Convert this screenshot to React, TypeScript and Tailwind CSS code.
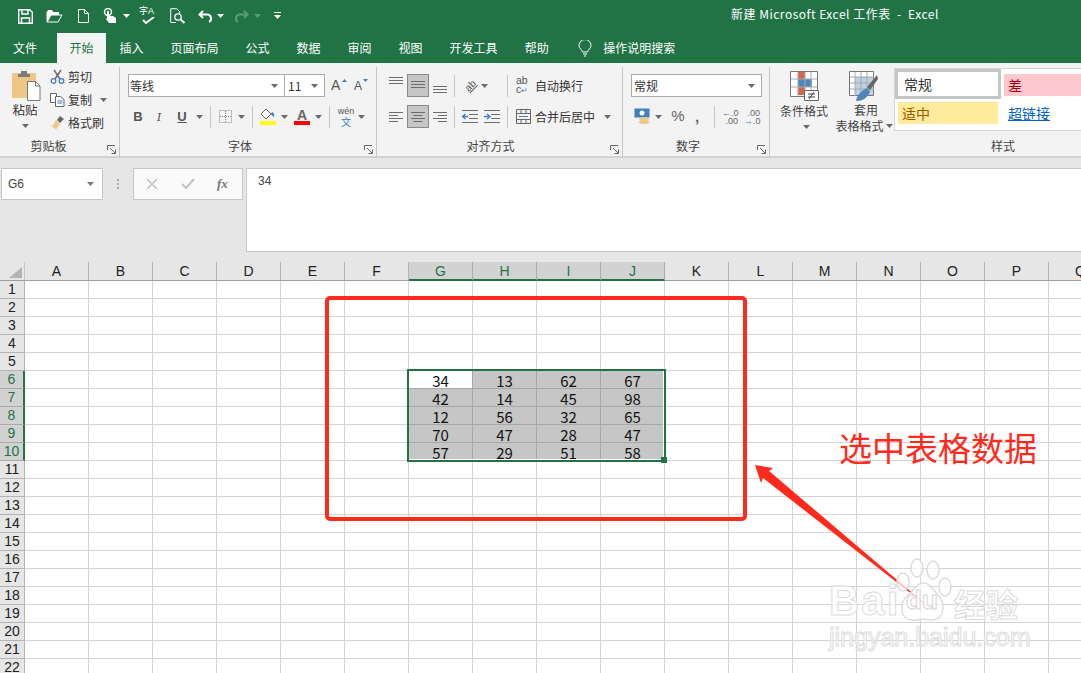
import React from "react";

const UI_FONT = "font-['Noto_Sans_CJK_SC','Liberation_Sans',sans-serif]";
const COLS = ["A", "B", "C", "D", "E", "F", "G", "H", "I", "J", "K", "L", "M", "N", "O", "P", "Q"];
const ROWS = Array.from({ length: 22 }, (_, i) => i + 1);
const SEL_COLS = ["G", "H", "I", "J"];
const DATA: Record<number, number[]> = {
  6: [34, 13, 62, 67],
  7: [42, 14, 45, 98],
  8: [12, 56, 32, 65],
  9: [70, 47, 28, 47],
  10: [57, 29, 51, 58],
};
const TABS = ["插入", "页面布局", "公式", "数据", "审阅", "视图", "开发工具", "帮助"];

function Caret({ color = "#6a6a6a", className = "" }: { color?: string; className?: string }) {
  return (
    <svg width="7" height="4" viewBox="0 0 7 4" className={`shrink-0 ${className}`}>
      <path d="M0 0h7L3.5 4z" fill={color} />
    </svg>
  );
}

function Sep({ className = "" }: { className?: string }) {
  return <div className={`w-px h-[22px] bg-[#c6c6c6] shrink-0 ${className}`} />;
}

function Launcher() {
  return (
    <svg width="9" height="9" viewBox="0 0 9 9" className="absolute right-[3px] bottom-[3px]">
      <path d="M.5 5V.5H8M3 3l5 5M8.500 4.500v4h-4" fill="none" stroke="#666" />
    </svg>
  );
}

function Group({ label, width, labelClass, children }: { label: string; width: string; labelClass: string; children: React.ReactNode }) {
  return (
    <div className={`relative h-[90px] shrink-0 mt-[4px] border-r border-[#c6c6c6] ${width}`}>
      <div className="h-[70px]">{children}</div>
      <div className={`text-center text-[12px] leading-[17px] text-[#444] ${labelClass}`}>{label}</div>
      <Launcher />
    </div>
  );
}

// quick access toolbar
function Qat() {
  return (
    <div className="absolute left-[18px] top-[8px] flex items-center">
      <svg width="15" height="15" viewBox="0 0 15 15" fill="none" stroke="#fff" strokeWidth="1.400">
        <path d="M.7.700h11l2.600 2.600v11H.7z" />
        <path d="M4 1v4h6V1M3.500 14V9h8v5" />
      </svg>
      <svg width="17" height="14" viewBox="0 0 17 14" fill="#fff" className="ml-[13px]">
        <path d="M1 3V13h11l4-7H5L1.800 12" fill="none" stroke="#fff" />
        <path d="M1 3 2 1h4l1 2h6v3H5L1 13z" fill="#fff" />
      </svg>
      <svg width="11" height="14" viewBox="0 0 11 14" fill="none" stroke="#fff" className="ml-[15px]">
        <path d="M.5.500h6l4 4v9H.5zM6.500.500v4h4" />
      </svg>
      <svg width="14" height="16" viewBox="0 0 14 16" className="ml-[14px]" fill="#fff">
        <circle cx="5" cy="4" r="3.500" fill="none" stroke="#fff" strokeWidth="1.400" />
        <path d="M4 3h2v5h4l3 2v5H6L3 11l1-1z" />
      </svg>
      <Caret color="#fff" className="ml-[6px]" />
      <div className="relative ml-[9px] w-[17px] h-[16px]">
        <span className="absolute left-0 top-[-3px] text-[9px] leading-[12px] text-white">字</span>
        <span className="absolute left-[9px] top-[-3px] text-[9px] leading-[12px] text-white font-['Liberation_Sans',sans-serif]">A</span>
        <svg width="14" height="8" viewBox="0 0 14 8" className="absolute left-[3px] top-[9px]" fill="none" stroke="#fff" strokeWidth="2">
          <path d="M1 3l3 3 8-6" />
        </svg>
      </div>
      <svg width="16" height="16" viewBox="0 0 16 16" fill="none" stroke="#fff" className="ml-[14px]">
        <path d="M6 14.500H.7V.700h6l3 3v2" />
        <circle cx="8" cy="9" r="3.200" strokeWidth="1.300" />
        <path d="M10.500 11.500 14.500 15" strokeWidth="2" />
      </svg>
      <svg width="15" height="13" viewBox="0 0 15 13" fill="none" stroke="#fff" strokeWidth="2" className="ml-[12px]">
        <path d="M5 1 1.500 4.500 5 8M2 4.500h7a4 4 0 0 1 2 7.500" />
      </svg>
      <Caret color="#fff" className="ml-[4px]" />
      <svg width="15" height="13" viewBox="0 0 15 13" fill="none" stroke="#5d9a7a" strokeWidth="2" className="ml-[10px]">
        <path d="M10 1l3.500 3.500L10 8M13 4.500H6a4 4 0 0 0-2 7.500" />
      </svg>
      <Caret color="#5d9a7a" className="ml-[5px]" />
      <svg width="7" height="8" viewBox="0 0 7 8" className="ml-[13px]" fill="#fff">
        <path d="M0 0h7v1H0zM0 3h7L3.500 7z" />
      </svg>
    </div>
  );
}

function AlignLines({ kind }: { kind: "left" | "center" | "right" | "plain" }) {
  const d = {
    plain: "M0 .5h14M0 3.500h14M0 6.500h14",
    left: "M0 .5h14M0 3.500h9M0 6.500h14M0 9.500h9",
    center: "M0 .5h14M2.500 3.500h9M0 6.500h14M2.500 9.500h9",
    right: "M0 .5h14M5 3.500h9M0 6.500h14M5 9.500h9",
  }[kind];
  return (
    <svg width="14" height="10" viewBox="0 0 14 10" fill="none" stroke="#6d6d6d">
      <path d={d} />
    </svg>
  );
}

function ActiveBox({ children }: { children: React.ReactNode }) {
  return (
    <div className="w-[22px] h-[23px] flex items-center justify-center bg-[#c6c6c6] border border-[#8a8a8a]">{children}</div>
  );
}

function ClipboardGroup() {
  return (
    <Group label="剪贴板" width="w-[120px]" labelClass="pr-[22px]">
      <div className="flex h-full">
        <div className="w-[50px] flex flex-col items-center">
          <svg width="29" height="31" viewBox="0 0 29 31" className="mt-[3px] ml-[3px]">
            <rect x="0" y="3" width="24" height="25" rx="1" fill="#eec788" />
            <path d="M6 4h12v3H6zM9 1h6v3H9z" fill="#7a7a7a" />
            <path d="M15.500 11.500h8l4.500 4.500v14.500H15.500z" fill="#fff" stroke="#777" />
            <path d="M23.500 11.500V16H28" fill="none" stroke="#777" />
          </svg>
          <div className="text-[12.500px] leading-[17px] text-[#333]">粘贴</div>
          <Caret className="mt-[6px]" />
        </div>
        <div className="flex flex-col -mt-[2px] text-[12px] leading-[23px] text-[#333]">
          <div className="flex items-center h-[23px]">
            <svg width="15" height="15" viewBox="0 0 15 15" fill="none" className="mr-[3px]">
              <path d="M4 1l6 9M11 1 5 10" stroke="#666" strokeWidth="1.400" />
              <circle cx="3.500" cy="12" r="2.300" stroke="#3f7fc1" strokeWidth="1.300" />
              <circle cx="11.500" cy="12" r="2.300" stroke="#3f7fc1" strokeWidth="1.300" />
            </svg>
            剪切
          </div>
          <div className="flex items-center h-[23px]">
            <svg width="15" height="14" viewBox="0 0 15 14" fill="#fff" stroke="#666" className="mr-[3px]">
              <path d="M.5.500h6v9h-6z" />
              <path d="M5.500 3.500h5l3.500 3v7H5.500z" />
              <path d="M7.500 8h5M7.500 10h5" stroke="#3f7fc1" />
            </svg>
            复制
            <Caret className="ml-[8px]" />
          </div>
          <div className="flex items-center h-[23px]">
            <svg width="15" height="14" viewBox="0 0 15 14" className="mr-[3px]">
              <path d="M10 0l4 3-4 4-3-3z" fill="#666" />
              <path d="M6 4l4 4-4 5.500L0 9l3 .5z" fill="#eec788" />
            </svg>
            格式刷
          </div>
        </div>
      </div>
    </Group>
  );
}

function FontGroup() {
  return (
    <Group label="字体" width="w-[257px]" labelClass="pr-[16px]">
      <div className="pl-[8px] pt-[7px]">
        <div className="flex items-center h-[23px]">
          <div className="w-[157px] h-[23px] bg-white border border-[#ababab] flex items-center justify-between pl-[1px] pr-[6px] text-[12px] text-[#333]">
            等线
            <Caret />
          </div>
          <div className="w-[40px] h-[23px] bg-white border border-l-0 border-[#ababab] flex items-center justify-between pl-[3px] pr-[6px] text-[12px] text-[#333]">
            11
            <Caret />
          </div>
          <div className="relative ml-[6px] w-[16px] h-[23px] text-[14px] leading-[23px] text-[#555] font-['Liberation_Sans',sans-serif]">
            A
            <svg width="5" height="3" viewBox="0 0 5 3" className="absolute left-[11px] top-[5px]"><path d="M0 3h5L2.500 0z" fill="#3f7fc1" /></svg>
          </div>
          <div className="relative ml-[7px] w-[16px] h-[23px] text-[12px] leading-[24px] text-[#555] font-['Liberation_Sans',sans-serif]">
            A
            <svg width="5" height="3" viewBox="0 0 5 3" className="absolute left-[9px] top-[5px]"><path d="M0 0h5L2.500 3z" fill="#3f7fc1" /></svg>
          </div>
        </div>
        <div className="flex items-center h-[23px] mt-[8px] text-[#555] font-['Liberation_Sans',sans-serif]">
          <span className="w-[20px] text-center text-[13px] font-bold">B</span>
          <span className="w-[22px] text-center text-[13px] italic font-serif">I</span>
          <span className="w-[24px] text-center text-[13px] font-bold underline">U</span>
          <Caret className="ml-[2px]" />
          <Sep className="ml-[7px]" />
          <svg width="13" height="13" viewBox="0 0 13 13" className="ml-[8px]" fill="none" stroke="#888" strokeDasharray="1 1">
            <path d="M.5.500h12v12H.5zM6.500 1v12M1 6.500h12" />
          </svg>
          <Caret className="ml-[6px]" />
          <Sep className="ml-[7px]" />
          <div className="ml-[7px] w-[16px] h-[17px] relative">
            <svg width="16" height="12" viewBox="0 0 16 12" className="absolute top-0 left-0">
              <path d="M1 6l5-5 5 5-5 5z" fill="#fff" stroke="#666" />
              <path d="M12 4c2 1 3 3 2 5-1-1-3-2-3-3z" fill="#3f7fc1" />
            </svg>
            <div className="absolute bottom-0 left-0 w-[16px] h-[4px] bg-[#ffff00]" />
          </div>
          <Caret className="ml-[5px]" />
          <div className="ml-[6px] w-[16px] h-[17px] relative text-center text-[14px] leading-[15px] font-bold text-[#666]">
            A
            <div className="absolute bottom-0 left-0 w-[16px] h-[4px] bg-[#ff0000]" />
          </div>
          <Caret className="ml-[5px]" />
          <Sep className="ml-[7px]" />
          <div className={`ml-[7px] w-[18px] flex flex-col items-center ${UI_FONT}`}>
            <span className="text-[9px] leading-[10px] text-[#555] font-['Liberation_Sans',sans-serif]">wén</span>
            <span className="text-[10px] leading-[11px] text-[#3f7fc1]">文</span>
          </div>
          <Caret className="ml-[3px]" />
        </div>
      </div>
    </Group>
  );
}

function AlignGroup() {
  return (
    <Group label="对齐方式" width="w-[246px]" labelClass="pr-[18px]">
      <div className="pl-[8px] pt-[7px] text-[12px] text-[#333]">
        <div className="flex items-center h-[23px]">
          <div className="w-[16px] mr-[2px] ml-[4px] h-[23px] pt-[3px]"><AlignLines kind="plain" /></div>
          <ActiveBox><AlignLines kind="plain" /></ActiveBox>
          <div className="w-[14px] ml-[4px] h-[23px] pt-[12px]"><AlignLines kind="plain" /></div>
          <Sep className="ml-[7px]" />
          <div className="ml-[7px] w-[17px] h-[16px] flex items-center justify-center">
            <span className="-rotate-45 text-[10px] leading-[10px] text-[#555] font-['Liberation_Sans',sans-serif] underline">ab</span>
          </div>
          <Caret className="ml-[2px]" />
          <Sep className="ml-[19px]" />
          <div className="ml-[8px] w-[14px] text-[10.500px] leading-[9px] text-[#555] font-['Liberation_Sans',sans-serif]">ab<br />c<span className="text-[#3f7fc1] text-[8px]">↵</span></div>
          <span className="ml-[5px]">自动换行</span>
        </div>
        <div className="flex items-center h-[23px] mt-[8px]">
          <div className="w-[16px] mr-[2px] ml-[4px]"><AlignLines kind="left" /></div>
          <ActiveBox><AlignLines kind="center" /></ActiveBox>
          <div className="w-[14px] ml-[4px]"><AlignLines kind="right" /></div>
          <Sep className="ml-[7px]" />
          <svg width="16" height="13" viewBox="0 0 16 13" className="ml-[7px]" fill="none" stroke="#6d6d6d">
            <path d="M0 .5h16M7 4.500h9M7 8.500h9M0 12.500h16" />
            <path d="M6 6.500H1M3.500 4l-3 2.500 3 2.500" stroke="#3f7fc1" strokeWidth="1.300" />
          </svg>
          <svg width="16" height="13" viewBox="0 0 16 13" className="ml-[6px]" fill="none" stroke="#6d6d6d">
            <path d="M0 .5h16M7 4.500h9M7 8.500h9M0 12.500h16" />
            <path d="M0 6.500h5M3 4l3 2.500L3 9" stroke="#3f7fc1" strokeWidth="1.300" />
          </svg>
          <Sep className="ml-[7px]" />
          <svg width="15" height="15" viewBox="0 0 15 15" className="ml-[8px]" fill="none" stroke="#666">
            <path d="M.5.500h14v14H.5zM1 4.500h13M1 10.500h13M5 1v3M10 1v3M5 11v3M10 11v3" />
            <path d="M3 7.500h9" stroke="#3f7fc1" />
          </svg>
          <span className="ml-[4px]">合并后居中</span>
          <Caret className="ml-[9px]" />
        </div>
      </div>
    </Group>
  );
}

function NumberGroup() {
  return (
    <Group label="数字" width="w-[147px]" labelClass="pr-[16px]">
      <div className="pl-[8px] pt-[7px]">
        <div className="w-[131px] h-[23px] bg-white border border-[#ababab] flex items-center justify-between pl-[2px] pr-[6px] text-[12px] text-[#333]">
          常规
          <Caret />
        </div>
        <div className="flex items-center h-[23px] mt-[8px] ml-[3px] text-[#666] font-['Liberation_Sans',sans-serif]">
          <svg width="16" height="17" viewBox="0 0 16 17">
            <rect x="0.500" y="0.500" width="15" height="9" fill="#3f7fc1" />
            <circle cx="8" cy="5" r="2.500" fill="#fff" />
            <ellipse cx="10" cy="11" rx="5" ry="2" fill="#eec788" />
            <ellipse cx="10" cy="14" rx="5" ry="2" fill="#eec788" />
          </svg>
          <Caret className="ml-[5px]" />
          <span className="ml-[8px] w-[16px] text-center text-[15px]">%</span>
          <span className="ml-[9px] w-[6px] text-[15px] font-bold leading-[14px]">,</span>
          <Sep className="ml-[13px]" />
          <div className="ml-[7px] w-[16px] text-[9px] leading-[8px] text-right">
            <span className="text-[#3f7fc1]">←</span>.0<br />.00
          </div>
          <div className="ml-[6px] w-[16px] text-[9px] leading-[8px] text-right">
            .00<br /><span className="text-[#3f7fc1]">→</span>.0
          </div>
        </div>
      </div>
    </Group>
  );
}

function StylesGroup() {
  return (
    <div className="relative flex-1 h-[90px] mt-[4px] min-w-0">
      <div className="flex h-[70px]">
        <div className="w-[68px] flex flex-col items-center text-[12px] leading-[16px] text-[#444]">
          <svg width="29" height="30" viewBox="0 0 29 30" className="mt-[4px]">
            <path d="M.5.500h27v25H.5z" fill="#fff" stroke="#777" />
            <path d="M8 1h7v7H8zM8 16h7v8H8z" fill="#d8644a" />
            <path d="M8 8h14v8H8z" fill="#4f86bd" />
            <path d="M1 8h26M1 16h26M8 1v24M15 1v24M21 1v24" stroke="#aaa" fill="none" />
            <path d="M14.500 19.500h14v10h-14z" fill="#fff" stroke="#666" />
            <path d="M18 23h7M18 26h7M24 21l-5 7" stroke="#444" fill="none" />
          </svg>
          <div className="mt-[2px]">条件格式</div>
          <Caret className="mt-[6px] ml-[4px]" />
        </div>
        <div className="w-[56px] flex flex-col items-center text-[12px] leading-[16px] text-[#444]">
          <svg width="29" height="30" viewBox="0 0 29 30" className="mt-[4px] -ml-[6px]">
            <path d="M.5.500h24v24H.5z" fill="#fff" stroke="#777" />
            <path d="M6 6h18v18H6z" fill="#bcd0e6" />
            <path d="M1 6h24M1 12h24M1 18h24M6 1v24M12 1v24M18 1v24" stroke="#aaa" fill="none" />
            <path d="M28 4 18 16l3 3L29 8z" fill="#666" />
            <path d="M7 30c1-6 6-11 11-13l3 3c-1 5-6 10-14 10z" fill="#4f86bd" />
          </svg>
          <div className="mt-[1px]">套用</div>
          <div className="whitespace-nowrap flex items-center -ml-[4px]">
            表格格式
            <Caret className="ml-[2px]" />
          </div>
        </div>
        <div className="flex-1 h-[63px] mt-[1px] bg-white border border-r-0 border-[#d4d4d4] text-[14px] leading-[18px] min-w-0 overflow-hidden">
          <div className="flex h-[30px]">
            <div className="w-[106px] shrink-0 h-[30px] border-[3px] border-[#c6c6c6] pl-[6px] flex items-center text-[#333]">常规</div>
            <div className="ml-[3px] flex-1 h-[22px] mt-[5px] bg-[#ffc7ce] pl-[4px] flex items-center text-[#9c0006]">差</div>
          </div>
          <div className="flex h-[22px] mt-[3px]">
            <div className="w-[100px] shrink-0 ml-[3px] bg-[#ffeb9c] pl-[4px] flex items-center text-[#9c5700]">适中</div>
            <div className="ml-[10px] flex items-center text-[#0563c1] underline">超链接</div>
          </div>
        </div>
      </div>
      <div className="pl-[155px] text-[12px] leading-[17px] text-[#444] text-center">样式</div>
    </div>
  );
}

function FormulaBar() {
  return (
    <div className="h-[105px] bg-[#e6e6e6] border-t border-[#d0d0d0] pt-[10px] flex items-start">
      <div className="ml-[1px] w-[102px] h-[32px] bg-white border border-[#c6c6c6] flex items-center justify-between pl-[6px] pr-[8px] text-[12px] text-[#444] font-['Liberation_Sans',sans-serif]">
        G6
        <Caret color="#777" />
      </div>
      <div className="w-[30px] h-[32px] flex flex-col items-center justify-center gap-[2px]">
        <div className="w-[2px] h-[2px] bg-[#aaa]" />
        <div className="w-[2px] h-[2px] bg-[#aaa]" />
        <div className="w-[2px] h-[2px] bg-[#aaa]" />
      </div>
      <div className="w-[110px] h-[32px] bg-[#fafafa] border border-[#c6c6c6] flex items-center pl-[12px]">
        <svg width="12" height="12" viewBox="0 0 12 12" fill="none" stroke="#c4c4c4" strokeWidth="1.600"><path d="M1 1l10 10M11 1 1 11" /></svg>
        <svg width="14" height="12" viewBox="0 0 14 12" fill="none" stroke="#c4c4c4" strokeWidth="2.200" className="ml-[23px]"><path d="M1 6l4 4 8-9" /></svg>
        <span className="ml-[22px] text-[13px] italic font-['Liberation_Serif',serif] font-bold text-[#777]">fx</span>
      </div>
      <div className="ml-[3px] flex-1 h-[84px] bg-white border border-r-0 border-[#c6c6c6] pl-[11px] pt-[3px] text-[12px] leading-[18px] text-[#444] font-['Liberation_Sans',sans-serif]">
        34
      </div>
    </div>
  );
}

function Sheet() {
  return (
    <div className="relative flex-1 bg-white overflow-hidden font-['Liberation_Sans',sans-serif]">
      <div className="flex h-[19px] bg-[#e6e6e6] border-b border-[#9f9f9f]">
        <div className="relative w-[25px] shrink-0 border-r border-[#c6c6c6]">
          <svg width="13" height="11" viewBox="0 0 13 11" className="absolute right-[2px] bottom-[2px]"><path d="M13 0v11H0z" fill="#b4b4b4" /></svg>
        </div>
        {COLS.map((c) =>
          SEL_COLS.includes(c) ? (
            <div key={c} className="w-[64px] shrink-0 h-[19px] bg-[#d2d2d2] border-r border-[#ababab] border-b-2 border-b-[#217346] text-center text-[14px] leading-[19px] text-[#217346]">
              {c}
            </div>
          ) : (
            <div key={c} className="w-[64px] shrink-0 border-r border-[#b4b4b4] text-center text-[14px] leading-[19px] text-[#222]">
              {c}
            </div>
          ),
        )}
      </div>
      {ROWS.map((r) => {
        const vals = DATA[r];
        return (
          <div key={r} className="flex h-[18px]">
            <div
              className={
                vals
                  ? "w-[25px] shrink-0 bg-[#d2d2d2] border-r-2 border-r-[#217346] border-b border-[#ababab] text-center text-[14px] leading-[17px] text-[#217346]"
                  : "w-[25px] shrink-0 bg-[#e6e6e6] border-r border-b border-[#b4b4b4] text-center text-[14px] leading-[17px] text-[#222]"
              }
            >
              {r}
            </div>
            {COLS.map((c, i) => {
              const idx = i - 6;
              const inSel = !!vals && idx >= 0 && idx < 4;
              if (!inSel) return <div key={c} className="w-[64px] shrink-0 border-r border-b border-[#d4d4d4]" />;
              const first = r === 6 && idx === 0;
              return (
                <div
                  key={c}
                  className={`w-[64px] shrink-0 border-r border-b border-[#a8a8a8] text-center text-[15px] pt-[2px] leading-[15px] text-[#111] ${UI_FONT} ${first ? "bg-white" : "bg-[#c6c6c6]"}`}
                >
                  {vals[idx]}
                </div>
              );
            })}
          </div>
        );
      })}

      {/* selection outline */}
      <div className="absolute left-[407px] top-[107px] w-[259px] h-[93px] border-2 border-[#217346] pointer-events-none">
        <div className="h-full w-full border border-t-0 border-l-0 border-white" />
        <div className="absolute right-[-3px] bottom-[-3px] w-[6px] h-[6px] bg-[#217346] border-0" />
      </div>

      {/* red annotations */}
      <div className="absolute left-[325px] top-[34px] w-[422px] h-[225px] border-[4px] border-[#ff2a1c] rounded-[5px]" />
      <div className={`absolute left-[839px] top-[165px] text-[33px] leading-[40px] text-[#ff2a1c] whitespace-nowrap ${UI_FONT}`}>
        选中表格数据
      </div>
      <svg width="200" height="170" viewBox="0 0 200 170" className="absolute left-[745px] top-[193px]">
        <path d="M10 10 28 13 24 16 191 158 18 23 16 28z" fill="#ff2a1c" />
      </svg>

      {/* watermark */}
      <div className="absolute left-[829px] top-[316px] text-[42px] leading-[46px] font-bold tracking-[2px] text-white/70 [-webkit-text-stroke:1px_#dcdcdc] whitespace-nowrap">
        Bai
      </div>
      <svg width="60" height="68" viewBox="0 0 60 68" className="absolute left-[895px] top-[294px]">
        <g fill="#fff" fillOpacity="0.7" stroke="#dcdcdc" strokeWidth="1.500">
          <ellipse cx="8" cy="26" rx="6" ry="9" />
          <ellipse cx="22" cy="12" rx="6" ry="9" />
          <ellipse cx="38" cy="14" rx="6" ry="9" />
          <ellipse cx="50" cy="31" rx="6" ry="9" />
          <path d="M28 27c7 0 10 7 15 12 7 7 8 24-6 25-4 0-6-1-9-1s-6 2-11 1C5 63 3 48 13 39c6-4 8-12 15-12z" />
        </g>
      </svg>
      <div className="absolute left-[906px] top-[322px] text-[26px] leading-[32px] font-bold text-white/60 [-webkit-text-stroke:1px_#d6d6d6] whitespace-nowrap">
        du
      </div>
      <div className={`absolute left-[954px] top-[323px] text-[32px] leading-[36px] font-bold text-white/70 [-webkit-text-stroke:1px_#dcdcdc] whitespace-nowrap ${UI_FONT}`}>
        经验
      </div>
      <div className="absolute left-[829px] top-[361px] text-[25px] leading-[28px] text-white/70 [-webkit-text-stroke:1px_#dcdcdc] whitespace-nowrap">
        jingyan.baidu.com
      </div>
    </div>
  );
}

export default function App() {
  return (
    <div className={`relative w-[1081px] h-[673px] flex flex-col overflow-hidden bg-white ${UI_FONT}`}>
      {/* title bar + tabs */}
      <div className="relative h-[63px] shrink-0 bg-[#217346] text-white text-[12px]">
        <Qat />
        <div className="absolute left-[731px] top-[4px] leading-[20px] tracking-[0.5px] whitespace-pre">新建 Microsoft Excel 工作表  -  Excel</div>
        <div className="absolute left-0 right-0 bottom-0 h-[30px] flex items-stretch">
          <div className="pl-[13px] pr-[13px] flex items-center">文件</div>
          <div className="ml-[7px] w-[49px] bg-[#f3f3f3] text-[#217346] flex items-center justify-center">开始</div>
          {TABS.map((t) => (
            <div key={t} className="px-[13.500px] flex items-center">{t}</div>
          ))}
          <svg width="14" height="17" viewBox="0 0 14 17" fill="none" stroke="#fff" className="ml-[16px] self-center">
            <path d="M4.500 12C4 9.500 1 8.500 1 5.500a6 6 0 0 1 12 0c0 3-3 4-3.500 6.500zM5 14h4M6 16h2" />
          </svg>
          <div className="ml-[11px] flex items-center">操作说明搜索</div>
        </div>
      </div>

      {/* ribbon */}
      <div className="h-[94px] shrink-0 bg-[#f3f3f3] flex border-b border-[#d4d4d4]">
        <ClipboardGroup />
        <FontGroup />
        <AlignGroup />
        <NumberGroup />
        <StylesGroup />
      </div>

      <FormulaBar />
      <Sheet />
    </div>
  );
}
